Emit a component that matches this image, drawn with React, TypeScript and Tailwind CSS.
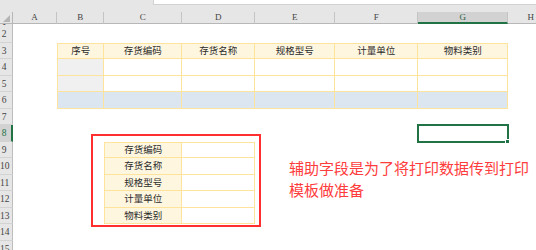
import React from 'react'
import clsx from 'clsx'

const COLS = ['A', 'B', 'C', 'D', 'E', 'F', 'G', 'H']
const HEAD = ['序号', '存货编码', '存货名称', '规格型号', '计量单位', '物料类别']
const SIDE = ['存货编码', '存货名称', '规格型号', '计量单位', '物料类别']
const ROWS = Array.from({ length: 15 }, (_, i) => i + 1)

// one cell of the sheet, r = row number, c = 1..8 for A..H
const Cell: React.FC<{ r: number; c: number }> = ({ r, c }) => {
  const inTop = r >= 3 && r <= 6 && c >= 2 && c <= 7
  const inSide = r >= 9 && r <= 13 && (c === 3 || c === 4)

  if (r === 8 && c === 7) {
    return (
      <div className="relative -m-px border-2 border-[#217346]">
        <div className="absolute -right-[3px] -bottom-[3px] h-[5px] w-[5px] border border-white bg-[#217346]" />
      </div>
    )
  }

  if (!inTop && !inSide) return <div />

  const cls = clsx(
    'flex items-center justify-center border-r border-b border-[#fde39c] text-[9.5px] leading-none text-[#2b2b2b]',
    (r === 3 || r === 9) && 'border-t',
    ((inTop && c === 2) || (inSide && c === 3)) && 'border-l',
    r === 3 && 'bg-[#fff6df]',
    (r === 4 || r === 5) && c === 2 && 'bg-[#f0f0f0]',
    (r === 4 || r === 5) && c !== 2 && 'bg-white',
    r === 6 && 'bg-[#dce6f1]',
    inSide && c === 3 && 'bg-[#fff6df]',
    inSide && c === 4 && 'bg-white',
  )

  let text = ''
  if (r === 3) text = HEAD[c - 2]
  if (inSide && c === 3) text = SIDE[r - 9]

  return <div className={cls}>{text}</div>
}

const App: React.FC = () => {
  return (
    <div className="relative h-[250px] w-[536px] overflow-hidden bg-white font-['Liberation_Sans','Noto_Sans_CJK_SC',sans-serif]">
      {/* formula bar edge */}
      <div className="flex h-[5px] bg-[#e6e6e6]">
        <div className="w-[153px]" />
        <div className="flex-1 border-b border-l border-[#d2d2d2] bg-white" />
      </div>
      <div className="h-[7px] bg-[#e6e6e6]" />

      {/* column headers */}
      <div className="grid h-[12px] grid-cols-[13px_44px_47.3px_78px_72.7px_80.3px_83px_90px_46px] bg-[#e6e6e6] font-['Liberation_Serif',serif] text-[9px] leading-none text-[#444]">
        <div className="flex items-end justify-center border-r border-b border-[#b7b7b7] pb-[1px]">
          <svg width="7" height="7" viewBox="0 0 7 7">
            <polygon points="7,0 7,7 0,7" fill="#b5b5b5" />
          </svg>
        </div>
        {COLS.map((l) => (
          <div
            key={l}
            className={clsx(
              'flex items-center justify-center border-r border-[#c4c4c4]',
              l === 'G'
                ? 'border-b-2 border-b-[#217346] bg-[#d2d2d2] text-[#2f5f45]'
                : 'border-b border-b-[#b7b7b7]',
            )}
          >
            {l}
          </div>
        ))}
      </div>

      {/* sheet body */}
      <div className="grid grid-cols-[13px_44px_47.3px_78px_72.7px_80.3px_83px_90px_46px] grid-rows-[2.2px_repeat(14,16.5px)]">
        {ROWS.map((r) => (
          <React.Fragment key={r}>
            <div
              className={clsx(
                'overflow-hidden border-r font-["Liberation_Serif",serif] text-[9.5px] leading-none',
                r === 8
                  ? 'border-r-2 border-r-[#217346] bg-[#d2d2d2] text-[#217346]'
                  : 'border-r-[#bdbdbd] bg-[#e6e6e6] text-[#444]',
                r === 1 ? '' : 'border-b border-b-[#d3d3d3]',
              )}
            >
              <div className={clsx('w-[8px] text-center', r === 1 ? '-mt-[6px]' : 'mt-[4px]')}>{r}</div>
            </div>
            {COLS.map((_, i) => (
              <Cell key={i} r={r} c={i + 1} />
            ))}
          </React.Fragment>
        ))}
      </div>

      {/* floating shapes */}
      <div className="absolute top-[134px] left-[91px] h-[93px] w-[170px] border-2 border-[#ff2f2f]" />
      <div className="absolute top-[157px] left-[289px] text-[15px] leading-[22px] whitespace-nowrap text-[#ff3c3c] font-['Noto_Sans_CJK_SC',sans-serif]">
        <div>辅助字段是为了将打印数据传到打印</div>
        <div>模板做准备</div>
      </div>
    </div>
  )
}

export default App
